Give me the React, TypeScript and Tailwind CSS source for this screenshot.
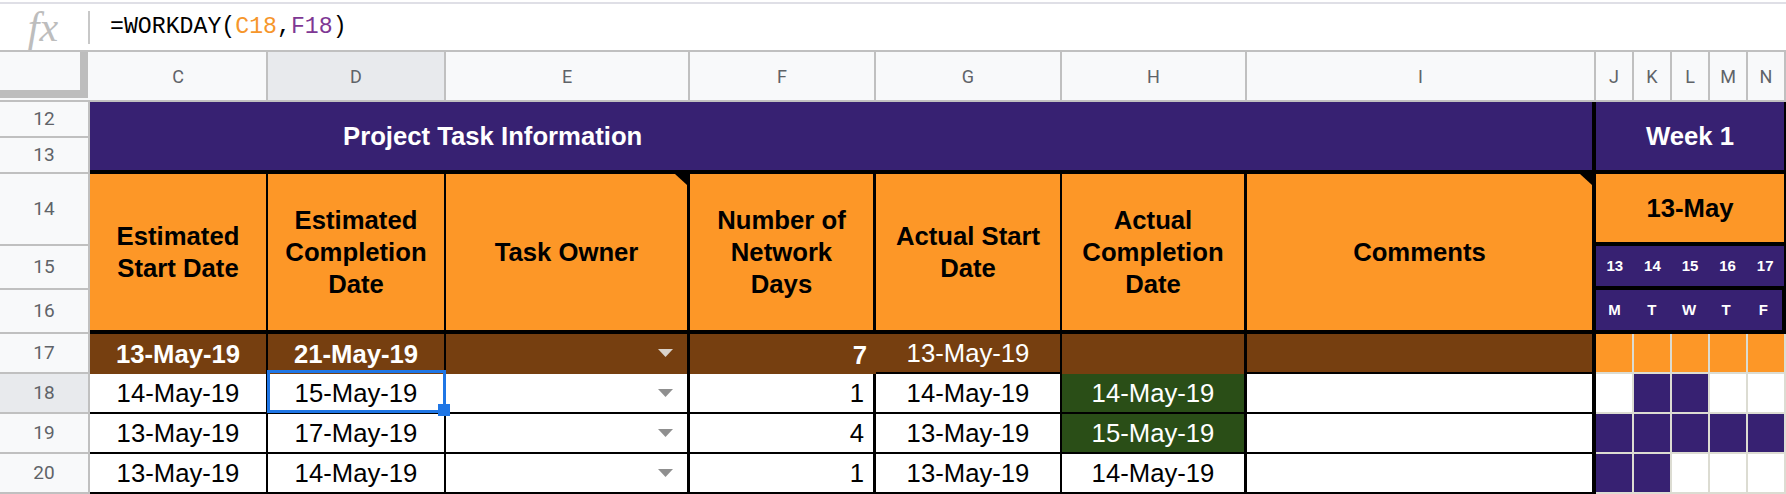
import React from 'react';

const PURPLE = 'bg-[#372172]';
const ORANGE = 'bg-[#fd9727]';
const BROWN = 'bg-[#763f10]';
const GREEN = 'bg-[#2a4e17]';

const columns = [
  { label: 'C' },
  { label: 'D', active: true },
  { label: 'E' },
  { label: 'F' },
  { label: 'G' },
  { label: 'H' },
  { label: 'I' },
  { label: 'J' },
  { label: 'K' },
  { label: 'L' },
  { label: 'M' },
  { label: 'N' },
];

const rows = [
  { num: 18, start: '14-May-19', end: '15-May-19', days: 1, actual: '14-May-19', done: '14-May-19', doneGreen: true, gantt: [0, 1, 1, 0, 0] },
  { num: 19, start: '13-May-19', end: '17-May-19', days: 4, actual: '13-May-19', done: '15-May-19', doneGreen: true, gantt: [1, 1, 1, 1, 1] },
  { num: 20, start: '13-May-19', end: '14-May-19', days: 1, actual: '13-May-19', done: '14-May-19', doneGreen: false, gantt: [1, 1, 0, 0, 0] },
];

const RowNum: React.FC<{ n: number; active?: boolean }> = ({ n, active }) => (
  <div className={`flex items-center justify-center border-r-2 border-b-2 border-[#c0c0c0] font-['Roboto',sans-serif] text-[19px] text-[#5f6368] ${active ? 'bg-[#e8eaed]' : 'bg-[#f8f9fa]'}`}>
    {n}
  </div>
);

const Note: React.FC = () => (
  <svg className="absolute top-0 right-0" width="12" height="11" viewBox="0 0 12 11">
    <path d="M0 0H12V11Z" fill="#000" />
  </svg>
);

const Arrow: React.FC<{ color: string }> = ({ color }) => (
  <svg className="absolute top-[15px] right-[14px]" width="15" height="8" viewBox="0 0 15 8">
    <path d="M0 0H15L7.5 8Z" fill={color} />
  </svg>
);

const HeadCell: React.FC<{ text: string; border: string; note?: boolean }> = ({ text, border, note }) => (
  <div className={`relative row-span-3 flex items-center justify-center whitespace-pre-line border-b-4 border-black text-center text-[25.7px] font-bold leading-[32px] text-black ${ORANGE} ${border}`}>
    {text}
    {note && <Note />}
  </div>
);

const DayStrip: React.FC<{ items: (string | number)[]; border: string }> = ({ items, border }) => (
  <div className={`col-span-5 grid grid-cols-5 items-center border-b-4 border-black text-center text-[15px] font-bold text-white ${PURPLE} ${border}`}>
    {items.map((d, i) => (
      <span key={i}>{d}</span>
    ))}
  </div>
);

export default function App() {
  return (
    <div className="h-[494px] w-[1786px] overflow-hidden bg-white font-['Liberation_Sans',Arial,sans-serif]">
      <div className="mt-[2px] flex h-[50px] items-center border-t-2 border-b-2 border-t-[#dfdfe6] border-b-[#c0c0c0]">
        <div className="flex h-[33px] w-[90px] shrink-0 items-center justify-center border-r-2 border-[#c8c8c8]">
          <span className="pr-[2px] font-['Liberation_Serif',serif] text-[42px] italic text-[#bdbdbd]">fx</span>
        </div>
        <div className="pl-[20px] font-['Liberation_Mono',monospace] text-[23.2px] text-black">
          =WORKDAY(<span className="text-[#f6962b]">C18</span>,<span className="text-[#7e3794]">F18</span>)
        </div>
      </div>

      <div className="grid grid-cols-[90px_178px_178px_244px_186px_186px_185px_349px_38px_38px_38px_38px_38px] grid-rows-[50px_36px_36px_72px_44px_44px_40px_40px_40px_40px]">
        {/* column letters */}
        <div className="border-b-2 border-[#c0c0c0] bg-[#f8f9fa]">
          <div className="h-[46px] w-[88px] border-r-8 border-b-8 border-[#bdbdbd]" />
        </div>
        {columns.map((c) => (
          <div
            key={c.label}
            className={`flex items-center justify-center border-r-2 border-b-2 border-[#c0c0c0] font-['Roboto',sans-serif] text-[18px] text-[#5f6368] ${c.active ? 'bg-[#e8eaed]' : 'bg-[#f8f9fa]'}`}
          >
            {c.label}
          </div>
        ))}

        {/* rows 12-13 */}
        <RowNum n={12} />
        <div className={`col-span-7 row-span-2 flex items-center border-r-4 border-b-4 border-black pl-[253px] text-[25.7px] font-bold text-white ${PURPLE}`}>
          Project Task Information
        </div>
        <div className={`col-span-5 row-span-2 flex items-center justify-center border-r-2 border-b-4 border-black text-[25.7px] font-bold text-white ${PURPLE}`}>
          Week 1
        </div>
        <RowNum n={13} />

        {/* rows 14-16 */}
        <RowNum n={14} />
        <HeadCell text={'Estimated\nStart Date'} border="border-r-2" />
        <HeadCell text={'Estimated\nCompletion\nDate'} border="border-r-2" />
        <HeadCell text="Task Owner" border="border-r-3" note />
        <HeadCell text={'Number of\nNetwork\nDays'} border="border-r-3" />
        <HeadCell text={'Actual Start\nDate'} border="border-r-2" />
        <HeadCell text={'Actual\nCompletion\nDate'} border="border-r-3" />
        <HeadCell text="Comments" border="border-r-4" note />
        <div className={`col-span-5 flex items-center justify-center border-r-2 border-b-4 border-black text-[25.7px] font-bold text-black ${ORANGE}`}>
          13-May
        </div>
        <RowNum n={15} />
        <DayStrip items={[13, 14, 15, 16, 17]} border="border-r-2" />
        <RowNum n={16} />
        <DayStrip items={['M', 'T', 'W', 'T', 'F']} border="border-r-4" />

        {/* row 17, totals */}
        <RowNum n={17} />
        <div className={`flex items-center justify-center border-r-2 border-black text-[25.7px] font-bold text-white ${BROWN}`}>13-May-19</div>
        <div className={`flex items-center justify-center border-r-2 border-black text-[25.7px] font-bold text-white ${BROWN}`}>21-May-19</div>
        <div className={`relative border-r-3 border-black ${BROWN}`}>
          <Arrow color="#d9d2ca" />
        </div>
        <div className={`flex items-end justify-end pr-[9px] pb-[3px] text-[25.7px] leading-[32px] font-bold text-white ${BROWN}`}>7</div>
        <div className={`flex items-center justify-center border-r-2 border-b-2 border-black text-[25.7px] text-white ${BROWN}`}>13-May-19</div>
        <div className={`border-r-3 border-black ${BROWN}`} />
        <div className={`border-r-4 border-b-2 border-black ${BROWN}`} />
        {[0, 1, 2, 3, 4].map((i) => (
          <div key={i} className={`border-r-2 border-b-2 border-[#dcdcd2] ${ORANGE}`} />
        ))}

        {/* task rows */}
        {rows.map((r) => (
          <React.Fragment key={r.num}>
            <RowNum n={r.num} active={r.num === 18} />
            <div className="flex items-center justify-center border-r-2 border-b-2 border-black text-[25.7px] text-black">{r.start}</div>
            <div className="relative flex items-center justify-center border-r-2 border-b-2 border-black text-[25.7px] text-black">
              {r.end}
              {r.num === 18 && (
                <>
                  <div className="absolute -top-[4px] -left-[1px] h-[43px] w-[179px] border-3 border-[#1f76e5]" />
                  <div className="absolute top-[30px] left-[170px] z-10 h-[12px] w-[12px] bg-[#1f76e5]" />
                </>
              )}
            </div>
            <div className="relative border-r-3 border-b-2 border-black">
              <Arrow color="#8f8f8f" />
            </div>
            <div className="flex items-center justify-end border-r-3 border-b-2 border-black pr-[9px] text-[25.7px] text-black">{r.days}</div>
            <div className="flex items-center justify-center border-r-2 border-b-2 border-black text-[25.7px] text-black">{r.actual}</div>
            <div className={`flex items-center justify-center border-r-3 border-b-2 border-black text-[25.7px] ${r.doneGreen ? `${GREEN} text-white` : 'text-black'}`}>{r.done}</div>
            <div className="border-r-4 border-b-2 border-black" />
            {r.gantt.map((on, i) => (
              <div key={i} className={`border-r-2 border-b-2 border-[#dcdcd2] ${on ? PURPLE : 'bg-white'}`} />
            ))}
          </React.Fragment>
        ))}
      </div>
    </div>
  );
}
